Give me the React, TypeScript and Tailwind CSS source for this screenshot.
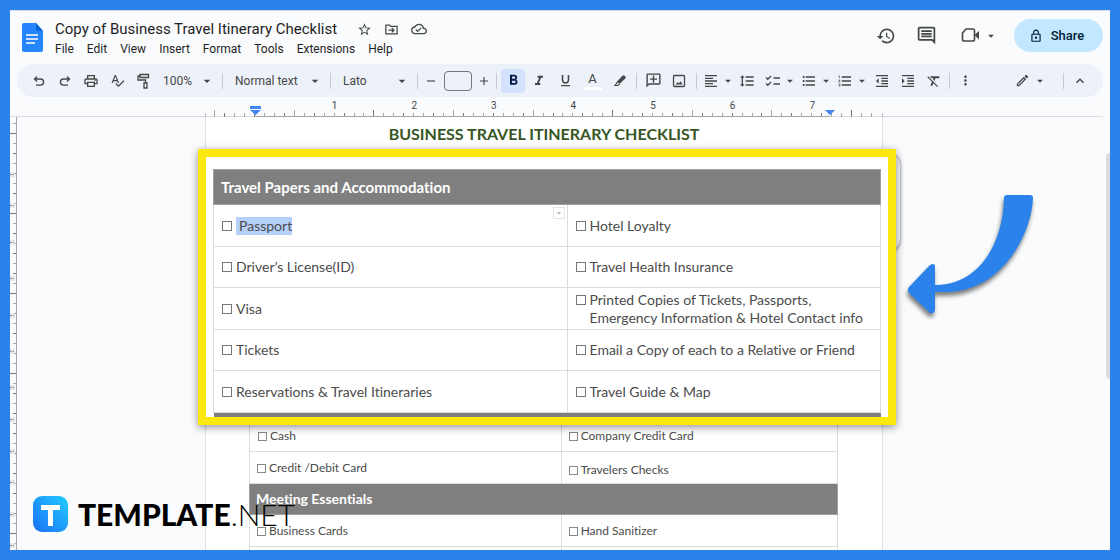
import type { ReactNode } from 'react';
import {
  MdAdd,
  MdArrowDropDown,
  MdFormatAlignLeft,
  MdFormatBold,
  MdFormatClear,
  MdFormatIndentDecrease,
  MdFormatIndentIncrease,
  MdFormatItalic,
  MdFormatLineSpacing,
  MdFormatListBulleted,
  MdFormatListNumbered,
  MdFormatUnderlined,
  MdHistory,
  MdKeyboardArrowUp,
  MdMoreVert,
  MdOutlineAddComment,
  MdOutlineCloudDone,
  MdOutlineEdit,
  MdOutlineInsertComment,
  MdOutlineLock,
  MdOutlinePrint,
  MdRemove,
  MdSpellcheck,
  MdStarBorder,
} from 'react-icons/md';

const menus = ['File', 'Edit', 'View', 'Insert', 'Format', 'Tools', 'Extensions', 'Help'];

const travelRows: [string, string][] = [
  ['Passport', 'Hotel Loyalty'],
  ['Driver’s License(ID)', 'Travel Health Insurance'],
  ['Visa', 'Printed Copies of Tickets, Passports, Emergency Information & Hotel Contact info'],
  ['Tickets', 'Email a Copy of each to a Relative or Friend'],
  ['Reservations & Travel Itineraries', 'Travel Guide & Map'],
];

const INCH = 79.6;

// Row handles on the vertical ruler, one per table row
const rowHandles = [57, 88, 125, 161, 198, 234, 270, 302, 334, 365, 397, 428];

interface ButtonProps {
  label: string;
  children: ReactNode;
}

function ToolButton({ label, children, className = 'w-[26px]' }: ButtonProps & { className?: string }) {
  return (
    <button aria-label={label} className={`flex h-6 shrink-0 items-center justify-center rounded ${className}`}>
      {children}
    </button>
  );
}

function MenuToolButton({ label, children }: ButtonProps) {
  return (
    <button aria-label={label} className="flex h-6 w-[34px] shrink-0 items-center justify-between pl-0.5">
      {children}
      <MdArrowDropDown size={14} />
    </button>
  );
}

function ToolSelect({ label, value, className }: { label: string; value: string; className: string }) {
  return (
    <div className={`relative flex shrink-0 items-center ${className}`}>
      <select aria-label={label} defaultValue={value} className="w-full appearance-none bg-transparent text-xs leading-4 outline-none">
        <option>{value}</option>
      </select>
      <MdArrowDropDown size={16} className="pointer-events-none absolute right-[7px]" />
    </div>
  );
}

function Separator({ className = 'mx-[3px]' }: { className?: string }) {
  return <div className={`h-4 w-px shrink-0 bg-[#c7cad1] ${className}`} />;
}

function DocsLogo() {
  return (
    <svg width="21" height="29" viewBox="0 0 21 29" className="shrink-0">
      <path d="M2 0h12l7 8v19a2 2 0 0 1-2 2H2a2 2 0 0 1-2-2V2a2 2 0 0 1 2-2z" fill="#2684fc" />
      <path d="M14 0l7 8h-6a1 1 0 0 1-1-1z" fill="#0066da" />
      <path d="M4 12h12M4 16h12M4 20h9" stroke="#fff" strokeWidth="1.5" />
    </svg>
  );
}

function Header() {
  return (
    <header className="flex h-[53px] items-start pl-3 pr-[7px] pt-2">
      <div className="pt-1">
        <DocsLogo />
      </div>
      <div className="ml-3 flex flex-col">
        <div className="flex h-5 items-center">
          <h1 className="font-[Roboto] text-[15px] leading-5 text-[#1f1f1f]">Copy of Business Travel Itinerary Checklist</h1>
          <div className="ml-5 flex items-center gap-3 text-[#444746]">
            <button aria-label="Star">
              <MdStarBorder size={15} />
            </button>
            <button aria-label="Move">
              <svg width="15" height="15" viewBox="0 0 24 24" fill="none" stroke="currentColor" strokeWidth="2">
                <path d="M3 5h6l2 2h10v12H3z M7 13h8 M12.500 9.500l3.500 3.500-3.500 3.500" />
              </svg>
            </button>
            <button aria-label="Document status">
              <MdOutlineCloudDone size={16} />
            </button>
          </div>
        </div>
        <nav className="flex h-5 items-center gap-[13px] font-[Roboto] text-xs text-[#1f1f1f]">
          {menus.map((menu) => (
            <button key={menu}>{menu}</button>
          ))}
        </nav>
      </div>
      <div className="ml-auto flex items-center text-[#444746]">
        <button aria-label="Version history">
          <MdHistory size={20} />
        </button>
        <button aria-label="Comments" className="ml-5">
          <MdOutlineInsertComment size={21} />
        </button>
        <button aria-label="Join a call" className="ml-6 flex items-center gap-1">
          <svg width="19" height="17" viewBox="0 0 19 17">
            <path d="M5 2h7a1.500 1.500 0 0 1 1.500 1.500v9a1.500 1.500 0 0 1-1.500 1.500H3a1.500 1.500 0 0 1-1.500-1.500V6z" fill="none" stroke="currentColor" strokeWidth="1.600" />
            <path d="M13.500 8l4.500-4v8.500z" fill="currentColor" />
          </svg>
          <MdArrowDropDown size={14} />
        </button>
        <button className="ml-4 flex h-[33px] w-[89px] items-center justify-center gap-2 rounded-full bg-[#c2e7ff] pr-1 font-[Roboto] text-[13px] font-medium text-[#001d35]">
          <MdOutlineLock size={14} />
          Share
        </button>
      </div>
    </header>
  );
}

function Toolbar() {
  return (
    <div className="mx-[7px] flex h-[33px] shrink-0 items-center rounded-full bg-[#edf2fa] pl-[9px] pr-[10px] font-[Roboto] text-[#444746]">
      <ToolButton label="Undo">
        <svg width="14" height="14" viewBox="0 0 14 14" fill="none" stroke="currentColor" strokeWidth="1.300">
          <path d="M5 2.500L2.500 5 5 7.500M2.500 5h6a3 3 0 0 1 0 6.200H4" />
        </svg>
      </ToolButton>
      <ToolButton label="Redo">
        <svg width="14" height="14" viewBox="0 0 14 14" fill="none" stroke="currentColor" strokeWidth="1.300">
          <path d="M9 2.500L11.500 5 9 7.500M11.500 5h-6a3 3 0 0 0 0 6.200H10" />
        </svg>
      </ToolButton>
      <ToolButton label="Print">
        <MdOutlinePrint size={16} />
      </ToolButton>
      <ToolButton label="Spelling and grammar check">
        <MdSpellcheck size={15} />
      </ToolButton>
      <ToolButton label="Paint format">
        <svg width="13" height="16" viewBox="0 0 13 16" fill="none" stroke="currentColor" strokeWidth="1.300">
          <path d="M3 1.500h8.500v3H3zM3 3H1v4h7.500v3M7 10h3v5H7z" />
        </svg>
      </ToolButton>
      <ToolSelect label="Zoom" value="100%" className="w-[66px] pl-[7px]" />
      <Separator className="" />
      <ToolSelect label="Styles" value="Normal text" className="w-[107px] pl-3" />
      <Separator className="" />
      <ToolSelect label="Font" value="Lato" className="w-[86px] pl-3" />
      <Separator className="" />
      <ToolButton label="Decrease font size">
        <MdRemove size={14} />
      </ToolButton>
      <input aria-label="Font size" className="h-5 w-7 shrink-0 rounded border border-[#747775] bg-transparent text-center text-xs outline-none" />
      <ToolButton label="Increase font size" className="w-6">
        <MdAdd size={14} />
      </ToolButton>
      <Separator className="mr-1" />
      <ToolButton label="Bold" className="w-6 bg-[#d3e3fd] text-[#041e49]">
        <MdFormatBold size={17} />
      </ToolButton>
      <ToolButton label="Italic" className="w-[27px]">
        <MdFormatItalic size={16} />
      </ToolButton>
      <ToolButton label="Underline" className="w-[27px]">
        <MdFormatUnderlined size={15} />
      </ToolButton>
      <ToolButton label="Text color" className="w-[27px] flex-col">
        <span className="text-[13px] leading-4">A</span>
        <span className="h-[3px] w-[18px] bg-white" />
      </ToolButton>
      <ToolButton label="Highlight color" className="w-[27px]">
        <svg width="14" height="14" viewBox="0 0 14 14">
          <path d="M4 7.500L9.500 1.800a1.400 1.400 0 0 1 2 0l.8.800a1.400 1.400 0 0 1 0 2L6.500 10z" fill="currentColor" />
          <path d="M4.500 7.500L3.500 9.500 2 11.500h3l1.500-1.500" fill="none" stroke="currentColor" strokeWidth="1.200" />
        </svg>
      </ToolButton>
      <Separator />
      <ToolButton label="Add comment">
        <MdOutlineAddComment size={17} className="-scale-x-100" />
      </ToolButton>
      <ToolButton label="Insert image">
        <svg width="14" height="14" viewBox="0 0 14 14">
          <rect x="1.500" y="1.500" width="11" height="11" rx="1" fill="none" stroke="currentColor" strokeWidth="1.300" />
          <path d="M3.500 10.500l2-2.500 1.300 1.500 1.700-2.200 2.200 3.200z" fill="currentColor" />
        </svg>
      </ToolButton>
      <Separator className="mx-1" />
      <MenuToolButton label="Align">
        <MdFormatAlignLeft size={16} />
      </MenuToolButton>
      <ToolButton label="Line spacing" className="w-6">
        <MdFormatLineSpacing size={16} />
      </ToolButton>
      <div className="ml-1 flex gap-0.5">
        <MenuToolButton label="Checklist">
          <svg width="16" height="16" viewBox="0 0 16 16" fill="none" stroke="currentColor" strokeWidth="1.300">
            <path d="M1 4.500L2.800 6.300 6 3M1 10.500l1.800 1.800L6 9M8.500 5H15M8.500 11H15" />
          </svg>
        </MenuToolButton>
        <MenuToolButton label="Bulleted list">
          <MdFormatListBulleted size={16} />
        </MenuToolButton>
        <MenuToolButton label="Numbered list">
          <MdFormatListNumbered size={16} />
        </MenuToolButton>
      </div>
      <ToolButton label="Decrease indent">
        <MdFormatIndentDecrease size={16} />
      </ToolButton>
      <ToolButton label="Increase indent">
        <MdFormatIndentIncrease size={16} />
      </ToolButton>
      <ToolButton label="Clear formatting">
        <MdFormatClear size={16} />
      </ToolButton>
      <Separator className="mx-0.5" />
      <ToolButton label="More">
        <MdMoreVert size={15} />
      </ToolButton>
      <div className="ml-auto flex items-center">
        <MenuToolButton label="Editing mode">
          <MdOutlineEdit size={15} />
        </MenuToolButton>
        <Separator className="ml-4 mr-[3px]" />
        <ToolButton label="Hide the menus">
          <MdKeyboardArrowUp size={16} />
        </ToolButton>
      </div>
    </div>
  );
}

// Ticks sit every eighth of an inch, measured from the left margin at x = 50
function HorizontalRuler() {
  const ticks = Array.from({ length: 67 }, (_, i) => i - 4);
  return (
    <svg width="678" height="20" viewBox="0 0 678 20" className="mx-auto shrink-0">
      <path d="M.5 16v4M677.500 16v4" stroke="#b9bcc1" />
      {ticks.map((i) => {
        const x = Math.round(50 + (i * INCH) / 8) - 0.5;
        return <path key={i} d={`M${x} ${i % 8 === 4 || i === -4 ? 13 : 16}V20`} stroke={i % 3 ? '#a5a7aa' : '#77797c'} />;
      })}
      {[1, 2, 3, 4, 5, 6, 7].map((n) => (
        <text key={n} x={50 + n * INCH} y="12" textAnchor="middle" fontSize="10" fontFamily="Roboto" fill="#444746">
          {n}
        </text>
      ))}
      <path d="M50 19.500H625" stroke="#a5a7aa" />
      <path d="M45 9h11v3H45zM45 13h11l-5.500 5zM620 13h10l-5 5z" fill="#4285f4" />
    </svg>
  );
}

function VerticalRuler() {
  const ticks = Array.from({ length: 43 }, (_, i) => i);
  return (
    <svg width="7" height="433" viewBox="0 0 7 433" className="shrink-0">
      <path d="M6.500 0v433" stroke="#a5a7aa" />
      {ticks.map((i) => (
        <path key={i} d={`M${i % 8 === 1 ? 0 : 3} ${6.5 + i * 10}H6`} stroke={i % 2 ? '#77797c' : '#a5a7aa'} />
      ))}
      {rowHandles.map((y) => (
        <g key={y}>
          <rect x="0" y={y - 2} width="5" height="5" fill="#e6e7e9" />
          <path d={`M0 ${y + 0.5}h4`} stroke="#8a8c8f" strokeDasharray="2 1" />
        </g>
      ))}
    </svg>
  );
}

interface ItemProps {
  text: string;
  selected?: boolean;
}

function BigItem({ text, selected }: ItemProps) {
  return (
    <label className="flex items-start gap-1">
      <input type="checkbox" className="mt-1 size-[10px] shrink-0 appearance-none border border-[#777]" />
      <span className={selected ? 'bg-[#b5d0fb] pl-[3px]' : ''}>{text}</span>
    </label>
  );
}

function SmallItem({ text }: ItemProps) {
  return (
    <label className="flex items-start gap-[3px]">
      <input type="checkbox" className="mt-1 size-[9px] shrink-0 appearance-none border border-[#888]" />
      <span>{text}</span>
    </label>
  );
}

// Enlarged copy of the first section, framed in yellow
function Callout() {
  return (
    <div className="absolute -left-2 -right-[14px] top-8 h-[276px] overflow-hidden border-8 border-[#fae80f] bg-white px-[7px] pt-3 shadow-[0_2px_8px_rgba(0,0,0,0.45)]">
      <table className="w-full table-fixed border-collapse text-sm leading-[18px] text-[#4b4b4b]">
        <colgroup>
          <col className="w-[53%]" />
          <col />
        </colgroup>
        <thead>
          <tr className="h-[35px] bg-[#7f7f7f] text-left text-[15px] text-white">
            <th colSpan={2} className="border border-[#a0a0a0] px-[7px] font-bold">
              Travel Papers and Accommodation
            </th>
          </tr>
        </thead>
        <tbody>
          {travelRows.map(([left, right], i) => (
            <tr key={left} className="odd:h-[42px] even:h-[41px]">
              <td className="relative border border-[#dcdcdc] px-2">
                <BigItem text={left} selected={i === 0} />
                {i === 0 && (
                  <button aria-label="Table options" className="absolute right-0.5 top-0.5 flex size-3 items-center justify-center border border-[#e4e4e4] text-[#b8b8b8]">
                    <MdArrowDropDown size={12} className="shrink-0" />
                  </button>
                )}
              </td>
              <td className="border border-[#dcdcdc] px-2">
                <BigItem text={right} />
              </td>
            </tr>
          ))}
          <tr className="h-9 bg-[#7f7f7f]">
            <td colSpan={2} />
          </tr>
        </tbody>
      </table>
    </div>
  );
}

function DocumentPage() {
  return (
    <main className="relative mx-auto w-[678px] border-x border-[#dfe1e4] bg-white font-[Lato] [font-variant-ligatures:none]">
      <h2 className="pt-[7px] text-center text-base font-bold leading-5 text-[#375623]">BUSINESS TRAVEL ITINERARY CHECKLIST</h2>
      <table className="mx-[43px] mt-[275px] w-[589px] table-fixed border-collapse text-xs leading-4 text-[#4b4b4b]">
        <colgroup>
          <col className="w-[53%]" />
          <col />
        </colgroup>
        <tbody>
          <tr className="h-8">
            <td className="border border-[#dcdcdc] px-2">
              <SmallItem text="Cash" />
            </td>
            <td className="border border-[#dcdcdc] px-[7px]">
              <SmallItem text="Company Credit Card" />
            </td>
          </tr>
          <tr className="h-8">
            <td className="border border-[#dcdcdc] px-[7px]">
              <SmallItem text="Credit /Debit Card" />
            </td>
            <td className="border border-[#dcdcdc] px-[7px] pt-1">
              <SmallItem text="Travelers Checks" />
            </td>
          </tr>
          <tr className="h-[31px] bg-[#7f7f7f] text-left text-sm text-white">
            <th colSpan={2} className="border border-[#a0a0a0] px-1.5 font-bold">
              Meeting Essentials
            </th>
          </tr>
          <tr className="h-8">
            <td className="border border-[#dcdcdc] px-[7px]">
              <SmallItem text="Business Cards" />
            </td>
            <td className="border border-[#dcdcdc] px-[7px]">
              <SmallItem text="Hand Sanitizer" />
            </td>
          </tr>
          <tr className="h-8">
            <td className="border border-[#dcdcdc]" />
            <td className="border border-[#dcdcdc]" />
          </tr>
        </tbody>
      </table>
      <div className="absolute -right-[19px] top-9 h-[98px] w-8 rounded-xl border border-[#c4c7cc] bg-[#f4f6fa] shadow-[0_1px_3px_rgba(0,0,0,0.35)]" />
      <Callout />
      <svg width="140" height="140" viewBox="0 0 140 140" className="absolute -right-[164px] top-[69px] drop-shadow-[-1px_4px_2px_rgba(0,0,0,0.5)]">
        <path
          d="M101 9h23q3 0 3 3C126 46 97 107 38 106h-9v17q0 5-5 4L3 107q-2-3 0-6L24 79q5-3 5 2v18C73 99 97 58 98 12q0-3 3-3z"
          fill="#2b82eb"
        />
      </svg>
    </main>
  );
}

function Brand() {
  return (
    <div className="absolute bottom-7 left-[33px] flex items-center gap-[10px] font-[Lato] text-[30px] leading-9 text-black">
      <svg width="35" height="36" viewBox="0 0 35 36">
        <defs>
          <linearGradient id="brand" x1="0" y1="1" x2="1" y2="0">
            <stop offset="0" stopColor="#1a6ff5" />
            <stop offset="1" stopColor="#22ccff" />
          </linearGradient>
        </defs>
        <rect width="35" height="36" rx="9" fill="url(#brand)" />
        <path d="M8 9h19v5h-7v16h-5V14H8z" fill="#fff" />
      </svg>
      <div>
        <span className="font-black">TEMPLATE</span>
        <span className="font-light">.NET</span>
      </div>
    </div>
  );
}

export default function App() {
  return (
    <div className="relative h-screen bg-[#2b82eb] p-[10px]">
      <div className="flex h-full flex-col overflow-hidden border-t border-[#d5dbe6] bg-[#f9fbfd]">
        <Header />
        <Toolbar />
        <div className="mr-[7px] flex h-5 shrink-0 border-b border-[#dadce0] pr-[25px]">
          <HorizontalRuler />
        </div>
        <div className="flex min-h-0 flex-1">
          <VerticalRuler />
          <div className="flex flex-1 pr-[39px]">
            <DocumentPage />
          </div>
          <div className="-ml-1 mt-9 h-[226px] w-1 shrink-0 rounded-l bg-[#dadce0]" />
        </div>
      </div>
      <Brand />
    </div>
  );
}
